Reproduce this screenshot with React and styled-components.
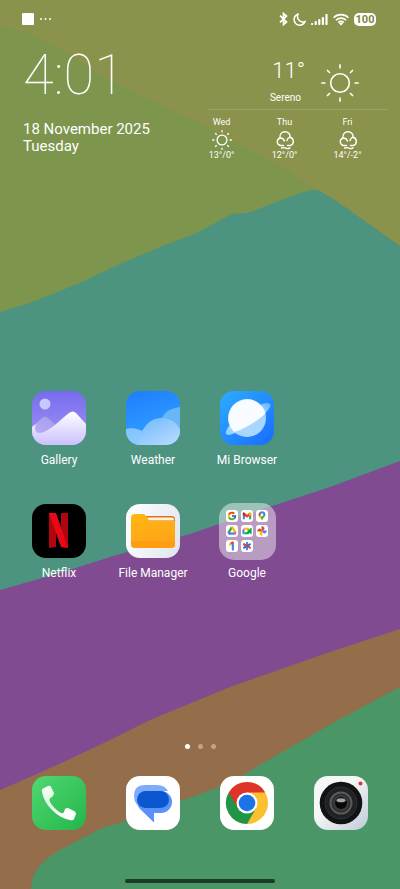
import React from 'react';
import styled, { createGlobalStyle } from 'styled-components';
import { FcGoogle } from 'react-icons/fc';

const GlobalStyle = createGlobalStyle`
  * {
    box-sizing: border-box;
  }

  body {
    margin: 0;
    font-family: Roboto, 'Noto Sans', sans-serif;
    color: #fff;
  }
`;

const Screen = styled.main`
  position: relative;
  z-index: 0;
  display: flex;
  flex-direction: column;
  min-height: 100vh;
  overflow: hidden;
`;

const WallpaperSvg = styled.svg`
  position: absolute;
  inset: 0;
  z-index: -1;
  width: 100%;
  height: 100%;
`;

const StatusBar = styled.header`
  display: flex;
  align-items: center;
  justify-content: space-between;
  padding: 12px 24px 0 22px;
`;

const StatusGroup = styled.div`
  display: flex;
  align-items: center;
  gap: ${props => props.$gap}px;
`;

const Notification = styled.span`
  width: 12px;
  height: 12px;
  border-radius: 1px;
  background: #fff;
`;

const Battery = styled.span`
  width: 22px;
  height: 13px;
  border-radius: 5px;
  background: #fff;
  color: #80863f;
  font-size: 11px;
  font-weight: 700;
  line-height: 13px;
  text-align: center;
`;

const Widgets = styled.section`
  display: flex;
  justify-content: space-between;
  padding: 15px 12px 0 23px;
`;

const Clock = styled.time`
  display: block;
  font-size: 56px;
  font-weight: 100;
  line-height: 68px;
`;

const DateText = styled.div`
  display: flex;
  flex-direction: column;
  margin-top: 12px;
  font-size: 15px;
  line-height: 17px;
`;

const Weather = styled.div`
  width: 198px;
  padding-top: 20px;
`;

const Current = styled.div`
  display: flex;
  align-items: center;
  justify-content: flex-end;
  gap: 16px;
  margin-left: 18px;
  padding: 0 29px 5px 0;
  border-bottom: 1px solid rgba(255, 255, 255, 0.15);
`;

const CurrentText = styled.div`
  text-align: right;
`;

const Temperature = styled.div`
  font-size: 22px;
  font-weight: 300;
  line-height: 20px;
`;

const Condition = styled.div`
  margin-top: 11px;
  padding-right: 4px;
  font-size: 10px;
  line-height: 12px;
`;

const Forecast = styled.div`
  display: grid;
  grid-template-columns: repeat(3, 63px);
  padding-top: 6px;
`;

const Day = styled.div`
  display: flex;
  flex-direction: column;
  align-items: center;
  font-size: 9px;
  line-height: 12px;

  svg {
    margin: 2px 0 -1px;
  }
`;

const AppGrid = styled.section`
  display: grid;
  grid-template-columns: repeat(4, 1fr);
  grid-auto-rows: 113px;
  flex: 1;
  padding: 228px 12px 0;
`;

const AppButton = styled.button`
  display: flex;
  flex-direction: column;
  align-items: center;
  padding: 0;
  border: 0;
  background: none;
  color: inherit;
  font: inherit;
  font-size: 12px;
  line-height: 16px;
  white-space: nowrap;
`;

const IconSlot = styled.span`
  display: flex;
  align-items: center;
  justify-content: center;
  height: 58px;
  margin-bottom: 5px;
`;

const Tile = styled.span`
  display: block;
  width: 54px;
  height: 54px;
  border-radius: 14px;
  overflow: hidden;
  background: ${props => props.$background};

  svg {
    display: block;
  }
`;

const Folder = styled.span`
  display: grid;
  grid-template-columns: repeat(3, 12px);
  grid-auto-rows: 12px;
  gap: 3px;
  width: 57px;
  height: 57px;
  padding: 7px;
  border-radius: 15px;
  background: rgba(255, 255, 255, 0.45);
`;

const MiniTile = styled.span`
  display: flex;
  align-items: center;
  justify-content: center;
  border-radius: 3px;
  background: #fff;
`;

const Pager = styled.nav`
  display: flex;
  justify-content: center;
  gap: 8px;
  padding-bottom: 25px;
`;

const PageDot = styled.button`
  width: 5px;
  height: 5px;
  padding: 0;
  border: 0;
  border-radius: 50%;
  background: ${props => (props.$active ? '#fff' : 'rgba(255, 255, 255, 0.38)')};
`;

const Dock = styled.section`
  display: grid;
  grid-template-columns: repeat(4, 1fr);
  padding: 0 12px 42px;
`;

const HomeBar = styled.div`
  align-self: center;
  width: 150px;
  height: 4px;
  margin-bottom: 6px;
  border-radius: 2px;
  background: #1d3a2a;
`;

const Wallpaper = () => (
  <WallpaperSvg viewBox="0 0 400 889" preserveAspectRatio="none" aria-hidden="true">
    <rect width="400" height="889" fill="#8b924b" />
    <path d="M0 27Q24 29 60 49L100 75 150 100 200 124 285 168 318 192V320H0Z" fill="#7d954c" />
    <path d="M0 312 30 303 80 283 120 264 160 247 195 234 232 214 248 213 300 193 312 190 318 190 335 200 400 246V650H0Z" fill="#4c9380" />
    <path d="M0 590 60 573 110 557 190 534 260 510 330 487 400 461V700L0 850Z" fill="#804b91" />
    <path d="M0 790 30 777 68 760 110 740 150 720 230 687 330 652 400 629V889H0Z" fill="#946e4a" />
    <path d="M400 687 340 719 300 742 268 760 245 774 222 786 200 794 125 821 100 829 60 850Q31 866 31 889H400Z" fill="#4b9666" />
  </WallpaperSvg>
);

const BluetoothIcon = () => (
  <svg width="9" height="14" viewBox="0 0 9 14" fill="none" stroke="#fff" strokeWidth="1.7">
    <path d="M1 3.700 7.500 10 4.500 12.500V1.500L7.500 4 1 10.300" />
  </svg>
);

const MoonIcon = () => (
  <svg width="13" height="13" viewBox="0 0 13 13" fill="none" stroke="#fff" strokeWidth="1.5" strokeLinejoin="round">
    <path d="M5.200 1A5.700 5.700 0 1 0 12.200 8.300 5.300 5.300 0 0 1 5.200 1Z" />
  </svg>
);

const SignalIcon = () => (
  <svg width="17" height="12" viewBox="0 0 17 12" fill="#fff">
    {[2, 4, 6, 8, 11].map((height, i) => (
      <rect key={height} x={i * 3.6} y={12 - height} width="2.2" height={height} rx=".8" />
    ))}
  </svg>
);

const WifiIcon = () => (
  <svg width="16" height="13" viewBox="0 0 16 13" fill="none" stroke="#fff" strokeWidth="1.6">
    <path d="M.6 4.700A10.500 10.500 0 0 1 15.400 4.700M2.900 7.200a7.200 7.200 0 0 1 10.200 0M5.100 9.500a4.200 4.200 0 0 1 5.800 0" />
    <path d="M5.800 10.300a3.200 3.200 0 0 1 4.400 0L8 12.600Z" fill="#fff" stroke="none" />
  </svg>
);

const SunIcon = ({ size, stroke }) => (
  <svg width={size} height={size} viewBox="0 0 38 38" fill="none" stroke="#fff" strokeWidth={stroke}>
    <circle cx="19" cy="19" r="9.300" />
    <path d="M19 .3v4.200M19 33.500v4.200M.3 19h4.200M33.500 19h4.200M6 6l3 3M29 29l3 3M6 32l3-3M29 9l3-3" />
  </svg>
);

const CloudIcon = () => (
  <svg width="20" height="20" viewBox="0 0 20 20" fill="none" stroke="#fff" strokeWidth="1.4" strokeLinecap="round">
    <path d="M8.500 15.500H5.200A3.900 3.900 0 0 1 5 8C4.300 4 7 1.700 10 1.700S15.500 4 15 7.200a4.300 4.300 0 0 1 .3 8.300H12.500" />
    <path d="M5 8q3.500-.2 4.500 3M12 10.500Q12.500 8 15 7.200M6.500 18q3-.8 4.500.2t4-.4" />
  </svg>
);

const GalleryIcon = () => (
  <svg width="54" height="54" viewBox="0 0 54 54">
    <defs>
      <linearGradient id="gallerySky" x2="0" y2="1">
        <stop stopColor="#776bee" />
        <stop offset="1" stopColor="#a396f5" />
      </linearGradient>
      <linearGradient id="galleryHill" x2="0" y2="1">
        <stop stopColor="#fff" />
        <stop offset="1" stopColor="#cac0ff" />
      </linearGradient>
      <linearGradient id="galleryBack" x1="1" x2="0" y2="1">
        <stop stopColor="#a99bee" />
        <stop offset="1" stopColor="#b9aef5" />
      </linearGradient>
    </defs>
    <rect width="54" height="54" fill="url(#gallerySky)" />
    <circle cx="13" cy="13" r="5.500" fill="#c7c8ff" />
    <path d="M0 36 10 27q3-3 6 0l9 8-17 16H0Z" fill="url(#galleryBack)" />
    <path d="M0 36 4 33q-3 9 4 9c9-1 19-12 29-20q4-3 7 0l10 11v21H0Z" fill="url(#galleryHill)" />
  </svg>
);

const WeatherIcon = () => (
  <svg width="54" height="54" viewBox="0 0 54 54">
    <defs>
      <linearGradient id="weatherSky" x2="0.300" y2="1">
        <stop stopColor="#1f7dff" />
        <stop offset="1" stopColor="#30a2ff" />
      </linearGradient>
      <linearGradient id="weatherCloud" x2="1" y2="1">
        <stop stopColor="#62b5fc" />
        <stop offset="1" stopColor="#bddcff" />
      </linearGradient>
    </defs>
    <rect width="54" height="54" fill="url(#weatherSky)" />
    <path d="M35 28Q41 17 54 16v30H35Z" fill="#68b6f8" />
    <path d="M0 38q9-2 16 2Q23 27 35 27q13 0 19 11v16H0Z" fill="url(#weatherCloud)" />
    <path d="M0 38q9-2 16 2-4 7-4 14H0Z" fill="#89c8ff" opacity=".6" />
  </svg>
);

const BrowserIcon = () => (
  <svg width="54" height="54" viewBox="0 0 54 54">
    <defs>
      <linearGradient id="browserBg" x2="1" y2="1">
        <stop stopColor="#2dadff" />
        <stop offset="1" stopColor="#186cff" />
      </linearGradient>
      <linearGradient id="browserRing" x1="1" x2="0" y2="1">
        <stop stopColor="#58b0ff" />
        <stop offset=".5" stopColor="#f8fbff" />
        <stop offset="1" stopColor="#7fcbff" />
      </linearGradient>
    </defs>
    <rect width="54" height="54" fill="url(#browserBg)" />
    <circle cx="27" cy="27" r="19" fill="#a9d6ff" />
    <path d="M42 13c6-2 10-1 8 3C46 24 20 42 9 44c-5 0-4-4 1-10Z" fill="url(#browserRing)" />
    <path d="M11 37A19 19 0 1 1 45.600 22C38 30 24 38 14 41Z" fill="#f8fbff" />
  </svg>
);

const NetflixIcon = () => (
  <svg width="54" height="54" viewBox="0 0 54 54">
    <path d="M17 9h7v34l-7 1ZM29 9h7v35l-7-1Z" fill="#b00610" />
    <path d="M17 9h7l12 35q-4-1-7-1Z" fill="#e90916" />
  </svg>
);

const FileManagerIcon = () => (
  <svg width="54" height="54" viewBox="0 0 54 54">
    <defs>
      <linearGradient id="folderFront" x2=".3" y2="1">
        <stop stopColor="#ffb713" />
        <stop offset="1" stopColor="#ffa418" />
      </linearGradient>
    </defs>
    <path d="M18 12h28q3 0 3 4v16H18Z" fill="#e0730c" />
    <path d="M21 13.500h25q2 0 2 3H22Z" fill="#fff4e4" />
    <path d="M5 14q0-4 4-4h8q2 0 3 2l2 3q1 2 3 2h24v24q0 3-4 3H9q-4 0-4-4Z" fill="url(#folderFront)" />
    <path d="M5 37h44v4q0 3-4 3H9q-4 0-4-4Z" fill="#ff980e" opacity=".7" />
  </svg>
);

const PhoneIcon = () => (
  <svg width="54" height="54" viewBox="0 0 54 54">
    <defs>
      <linearGradient id="handset" x2="1" y2="1">
        <stop stopColor="#fff" />
        <stop offset=".45" stopColor="#d7f8dd" />
        <stop offset=".65" stopColor="#fff" />
      </linearGradient>
    </defs>
    <path
      d="M10 16Q9 13 12 12L16 10Q18 9 19 11L22 17Q22 19 20 21L18 22Q17 24 18 26 22 33 29 37 31 38 32 36L33 33Q34 32 36 32L42 35Q44 36 44 38L42 43Q41 45 38 44 28 42 20 34 12 26 10 16Z"
      fill="url(#handset)"
    />
  </svg>
);

const MessagesIcon = () => (
  <svg width="54" height="54" viewBox="0 0 54 54">
    <path d="M11 26q0-11 11-11h13a11 11 0 0 1 0 22H28v9.500L14 33q-3-3-3-7Z" fill="#5b91fa" />
    <path d="M19 9h12q8 0 11 6H22q-11 0-11 11v3q-3-4-3-9Q8 9 19 9Z" fill="#80aaff" />
    <rect x="11" y="15" width="32" height="17" rx="8.500" fill="#0b57d0" />
  </svg>
);

const ChromeIcon = () => (
  <svg width="54" height="54" viewBox="0 0 54 54">
    <circle cx="27" cy="27" r="21" fill="#fbc02d" />
    <path d="M27 27 8.800 16.500A21 21 0 0 0 27 48L36.100 32.300Z" fill="#209447" />
    <path d="M27 16.500H45.200A21 21 0 0 0 8.800 16.500L17.900 32.200Z" fill="#de3429" />
    <circle cx="27" cy="27" r="10.500" fill="#fff" />
    <circle cx="27" cy="27" r="8.300" fill="#1a73e8" />
  </svg>
);

const CameraIcon = () => (
  <svg width="54" height="54" viewBox="0 0 54 54">
    <circle cx="27" cy="27" r="21.300" fill="#121315" />
    <circle cx="27" cy="27" r="16" fill="#202123" stroke="#303235" />
    <circle cx="27" cy="27" r="10.500" fill="#2c2d2e" stroke="#58595a" strokeWidth="2" />
    <circle cx="27" cy="27" r="8" fill="#3b3b3b" />
    <circle cx="27" cy="27" r="6" fill="#080808" />
    <ellipse cx="27" cy="24.300" rx="4.500" ry="2" fill="#a5a5a5" />
    <circle cx="46.500" cy="7.500" r="2" fill="#f12b43" />
  </svg>
);

const GmailIcon = () => (
  <svg width="10" height="10" viewBox="0 0 24 24">
    <path d="M2 6v14h5V10Z" fill="#4285f4" />
    <path d="M22 6v14h-5V10Z" fill="#34a853" />
    <path d="M2 5q2-3 5 0l5 4 5-4q3-3 5 0v4l-10 7L2 9Z" fill="#ea4335" />
    <path d="M17 5q3-3 5 0v4l-5 3.500Z" fill="#fbbc04" />
    <path d="M2 5v4l5 3.500V5Q4 2 2 5Z" fill="#c5221f" />
  </svg>
);

const MapsIcon = () => (
  <svg width="10" height="10" viewBox="0 0 24 24">
    <path d="M12 1a8 8 0 0 0-8 8c0 5 6 7 8 14 2-7 8-9 8-14a8 8 0 0 0-8-8Z" fill="#34a853" />
    <path d="M12 1a8 8 0 0 1 8 8l-8 3-6-8q2-3 6-3Z" fill="#4285f4" />
    <path d="m6 4 5 5-6 4Q2 8 6 4Z" fill="#ea4335" />
    <path d="m5 13 6-5 3 4-6 6Z" fill="#fbbc04" />
    <circle cx="12" cy="9" r="3.300" fill="#fff" />
  </svg>
);

const DriveIcon = () => (
  <svg width="10" height="10" viewBox="0 0 24 24">
    <path d="M9 2h6l-3 6-6 13-5-6Z" fill="#34a853" />
    <path d="M9 2h6l8 13h-7Z" fill="#fbbc04" />
    <path d="m1 15 3 6h16l-4-6Z" fill="#4285f4" />
    <path d="M16 15h7l-3 6Z" fill="#ea4335" />
    <path d="m12 9 4 6H8Z" fill="#fff" />
  </svg>
);

const MeetIcon = () => (
  <svg width="10" height="10" viewBox="0 0 24 24">
    <path d="M1 9h5v11H3q-2 0-2-2Z" fill="#4285f4" />
    <path d="m1 9 5-5v5Z" fill="#ea4335" />
    <path d="M6 4h9q2 0 2 2v6h-4V9H6Z" fill="#fbbc04" />
    <path d="M6 15h7v-3l9-8q1-1 1 1v14q0 2-1 1l-5-4v2q0 2-2 2H6Z" fill="#00ac47" />
  </svg>
);

const PhotosIcon = () => (
  <svg width="10" height="10" viewBox="0 0 24 24">
    <path d="M11 0q8 2 7 7-1 5-7 5Z" fill="#ea4335" />
    <path d="M24 11q-2 8-7 7-5-1-5-7Z" fill="#4285f4" />
    <path d="M13 24q-8-2-7-7 1-5 7-5Z" fill="#fbbc04" />
    <path d="M0 13q2-8 7-7 5 1 5 7Z" fill="#ea4335" />
  </svg>
);

const OneIcon = () => (
  <svg width="10" height="10" viewBox="0 0 24 24" fill="none" strokeWidth="5" strokeLinecap="round">
    <path d="m7 8 6-4" stroke="#fbbc04" />
    <path d="M14 5v6" stroke="#34a853" />
    <path d="M14 11v10" stroke="#4285f4" />
    <path d="m11 5 3-1" stroke="#ea4335" />
  </svg>
);

const HomeAsteriskIcon = () => (
  <svg width="10" height="10" viewBox="0 0 24 24" fill="none" strokeWidth="5" strokeLinecap="round">
    <path d="M12 4v16" stroke="#4285f4" />
    <path d="m5 8 14 8" stroke="#ea4335" />
    <path d="m5 16 14-8" stroke="#3367d6" />
    <path d="m5 8 5 3" stroke="#ea4335" />
  </svg>
);

const googleApps = [
  () => <FcGoogle size={10} />,
  GmailIcon,
  MapsIcon,
  DriveIcon,
  MeetIcon,
  PhotosIcon,
  OneIcon,
  HomeAsteriskIcon
];

const apps = [
  { name: 'Gallery', icon: GalleryIcon, column: 1 },
  { name: 'Weather', icon: WeatherIcon, column: 2 },
  { name: 'Mi Browser', icon: BrowserIcon, column: 3 },
  { name: 'Netflix', icon: NetflixIcon, column: 1, background: '#000' },
  {
    name: 'File Manager',
    icon: FileManagerIcon,
    column: 2,
    background: 'linear-gradient(110deg, #fff, #dfe4ee)'
  },
  { name: 'Google', folder: googleApps, column: 3 }
];

const dockApps = [
  { name: 'Phone', icon: PhoneIcon, background: 'linear-gradient(135deg, #51d772, #23b64a)' },
  { name: 'Messages', icon: MessagesIcon, background: '#fff' },
  { name: 'Chrome', icon: ChromeIcon, background: '#fff' },
  { name: 'Camera', icon: CameraIcon, background: 'linear-gradient(135deg, #f5f6f6 40%, #bfcbd8)' }
];

const forecast = [
  { day: 'Wed', range: '13°/0°', icon: <SunIcon size={20} stroke={2.6} /> },
  { day: 'Thu', range: '12°/0°', icon: <CloudIcon /> },
  { day: 'Fri', range: '14°/-2°', icon: <CloudIcon /> }
];

const GridCell = styled(AppButton)`
  grid-column: ${props => props.$column};
`;

const App = () => (
  <>
    <GlobalStyle />
    <Screen>
      <Wallpaper />

      <StatusBar>
        <StatusGroup $gap={6}>
          <Notification />
          <svg width="12" height="2" viewBox="0 0 12 2" fill="#fff">
            <circle cx="1" cy="1" r="1" />
            <circle cx="5.500" cy="1" r="1" />
            <circle cx="10" cy="1" r="1" />
          </svg>
        </StatusGroup>
        <StatusGroup $gap={5}>
          <BluetoothIcon />
          <MoonIcon />
          <SignalIcon />
          <WifiIcon />
          <Battery>100</Battery>
        </StatusGroup>
      </StatusBar>

      <Widgets>
        <div>
          <Clock>4:01</Clock>
          <DateText>
            <span>18 November 2025</span>
            <span>Tuesday</span>
          </DateText>
        </div>

        <Weather>
          <Current>
            <CurrentText>
              <Temperature>11°</Temperature>
              <Condition>Sereno</Condition>
            </CurrentText>
            <SunIcon size={38} stroke={1.6} />
          </Current>
          <Forecast>
            {forecast.map(({ day, range, icon }) => (
              <Day key={day}>
                {day}
                {icon}
                {range}
              </Day>
            ))}
          </Forecast>
        </Weather>
      </Widgets>

      <AppGrid>
        {apps.map(({ name, icon: Icon, folder, column, background }) => (
          <GridCell key={name} type="button" $column={column}>
            <IconSlot>
              {folder ? (
                <Folder>
                  {folder.map((Mini, i) => (
                    <MiniTile key={i}>
                      <Mini />
                    </MiniTile>
                  ))}
                </Folder>
              ) : (
                <Tile $background={background}>
                  <Icon />
                </Tile>
              )}
            </IconSlot>
            {name}
          </GridCell>
        ))}
      </AppGrid>

      <Pager aria-label="Home screens">
        {[1, 2, 3].map(page => (
          <PageDot key={page} type="button" $active={page === 1} aria-label={`Page ${page}`} />
        ))}
      </Pager>

      <Dock>
        {dockApps.map(({ name, icon: Icon, background }) => (
          <AppButton key={name} type="button" aria-label={name}>
            <IconSlot>
              <Tile $background={background}>
                <Icon />
              </Tile>
            </IconSlot>
          </AppButton>
        ))}
      </Dock>

      <HomeBar />
    </Screen>
  </>
);

export default App;
